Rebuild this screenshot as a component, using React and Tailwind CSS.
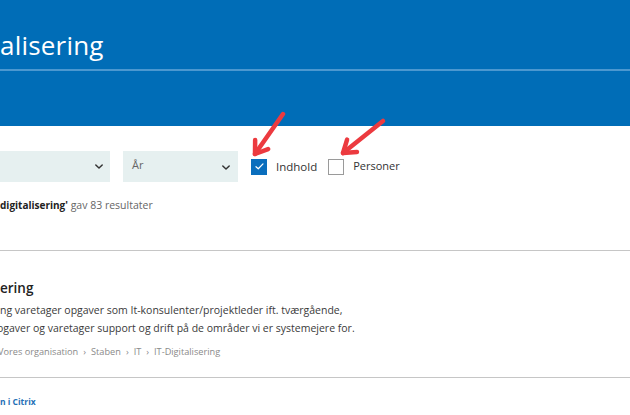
import React from 'react'

function Chevron({ className }){
  return (
    <svg viewBox="0 0 10 6" className={className} fill="none" stroke="#333" strokeWidth="1.8" strokeLinecap="round" strokeLinejoin="round">
      <path d="M1 1l4 4 4-4" />
    </svg>
  )
}

function Arrow({ x1, y1, x2, y2 }){
  const ang = Math.atan2(y2 - y1, x2 - x1)
  const len = 14
  const spread = 0.6
  const ax = x2 - len * Math.cos(ang - spread)
  const ay = y2 - len * Math.sin(ang - spread)
  const bx = x2 - len * Math.cos(ang + spread)
  const by = y2 - len * Math.sin(ang + spread)
  return (
    <g stroke="#ec3a3f" strokeWidth="4.5" strokeLinecap="round" strokeLinejoin="round" fill="none">
      <path d={`M${x1} ${y1}L${x2} ${y2}`} />
      <path d={`M${ax} ${ay}L${x2} ${y2}L${bx} ${by}`} />
    </g>
  )
}

export default function App(){
  return (
    <div className="relative w-[630px] h-[415px] overflow-hidden bg-white font-['Open_Sans',sans-serif] text-[#333]">
      <header className="bg-[#006db7] h-[126px]">
        <div className="h-[69px] pt-[29px]">
          <h1 className="text-[26px] leading-[32px] text-white tracking-[0.2px]">alisering</h1>
        </div>
        <div className="h-[2px] bg-[#4b98d0]"></div>
      </header>

      <div className="flex items-center mt-[25px] h-[31px]">
        <div className="w-[110px] h-full bg-[#e6f0f0] flex items-center justify-end pr-[7px]">
          <Chevron className="w-[8px] h-[5px]" />
        </div>
        <div className="ml-[13px] w-[115px] h-full bg-[#e6f0f0] flex items-start justify-between pl-[9px] pr-[8px]">
          <span className="text-[11px] text-[#666] mt-[6px]">År</span>
          <Chevron className="w-[8px] h-[5px] mt-[14px]" />
        </div>
        <div className="ml-[13px] flex items-center gap-[9px]">
          <span className="w-[16px] h-[16px] bg-[#0a6ebd] flex items-center justify-center">
            <svg viewBox="0 0 10 8" className="w-[9px] h-[7px]" fill="none" stroke="white" strokeWidth="1.4" strokeLinecap="round" strokeLinejoin="round">
              <path d="M1 4.2l2.6 2.4L9 1" />
            </svg>
          </span>
          <span className="text-[11.5px] text-[#333]">Indhold</span>
        </div>
        <div className="ml-[11px] flex items-center gap-[9px]">
          <span className="w-[16px] h-[16px] border border-[#9a9a9a] bg-white"></span>
          <span className="text-[11px] text-[#333]">Personer</span>
        </div>
      </div>

      <p className="mt-[15px] text-[10.5px] leading-[16px] text-[#666]">
        <b className="text-[#222] font-bold text-[10px]">digitalisering'</b> gav 83 resultater
      </p>

      <div className="mt-[37px] border-t border-[#c6c6c6]"></div>

      <div className="pt-[28px] pb-[18px]">
        <h2 className="text-[13.5px] leading-[18px] font-semibold text-[#222]">ering</h2>
        <p className="mt-[4px] text-[10.5px] leading-[18px] text-[#3a3a3a]">
          ng varetager opgaver som It-konsulenter/projektleder ift. tværgående,<br />
          <span className="-ml-[3px]">ogaver og varetager support og drift på de områder vi er systemejere for.</span>
        </p>
        <p className="mt-[8px] text-[9.2px] leading-[14px] text-[#8a8a8a] flex items-center gap-[5px]">
          <span className="-ml-[2px]">Vores organisation</span>
          <span>›</span><span>Staben</span>
          <span>›</span><span>IT</span>
          <span>›</span><span>IT-Digitalisering</span>
        </p>
      </div>

      <div className="border-t border-[#c6c6c6]"></div>

      <a className="block mt-[18px] text-[8.5px] leading-[12px] font-bold text-[#1f70b6]">n i Citrix</a>

      <svg className="absolute inset-0 pointer-events-none" width="630" height="415">
        <Arrow x1={283} y1={114} x2={255} y2={154} />
        <Arrow x1={383} y1={121} x2={343} y2={153} />
      </svg>
    </div>
  )
}
